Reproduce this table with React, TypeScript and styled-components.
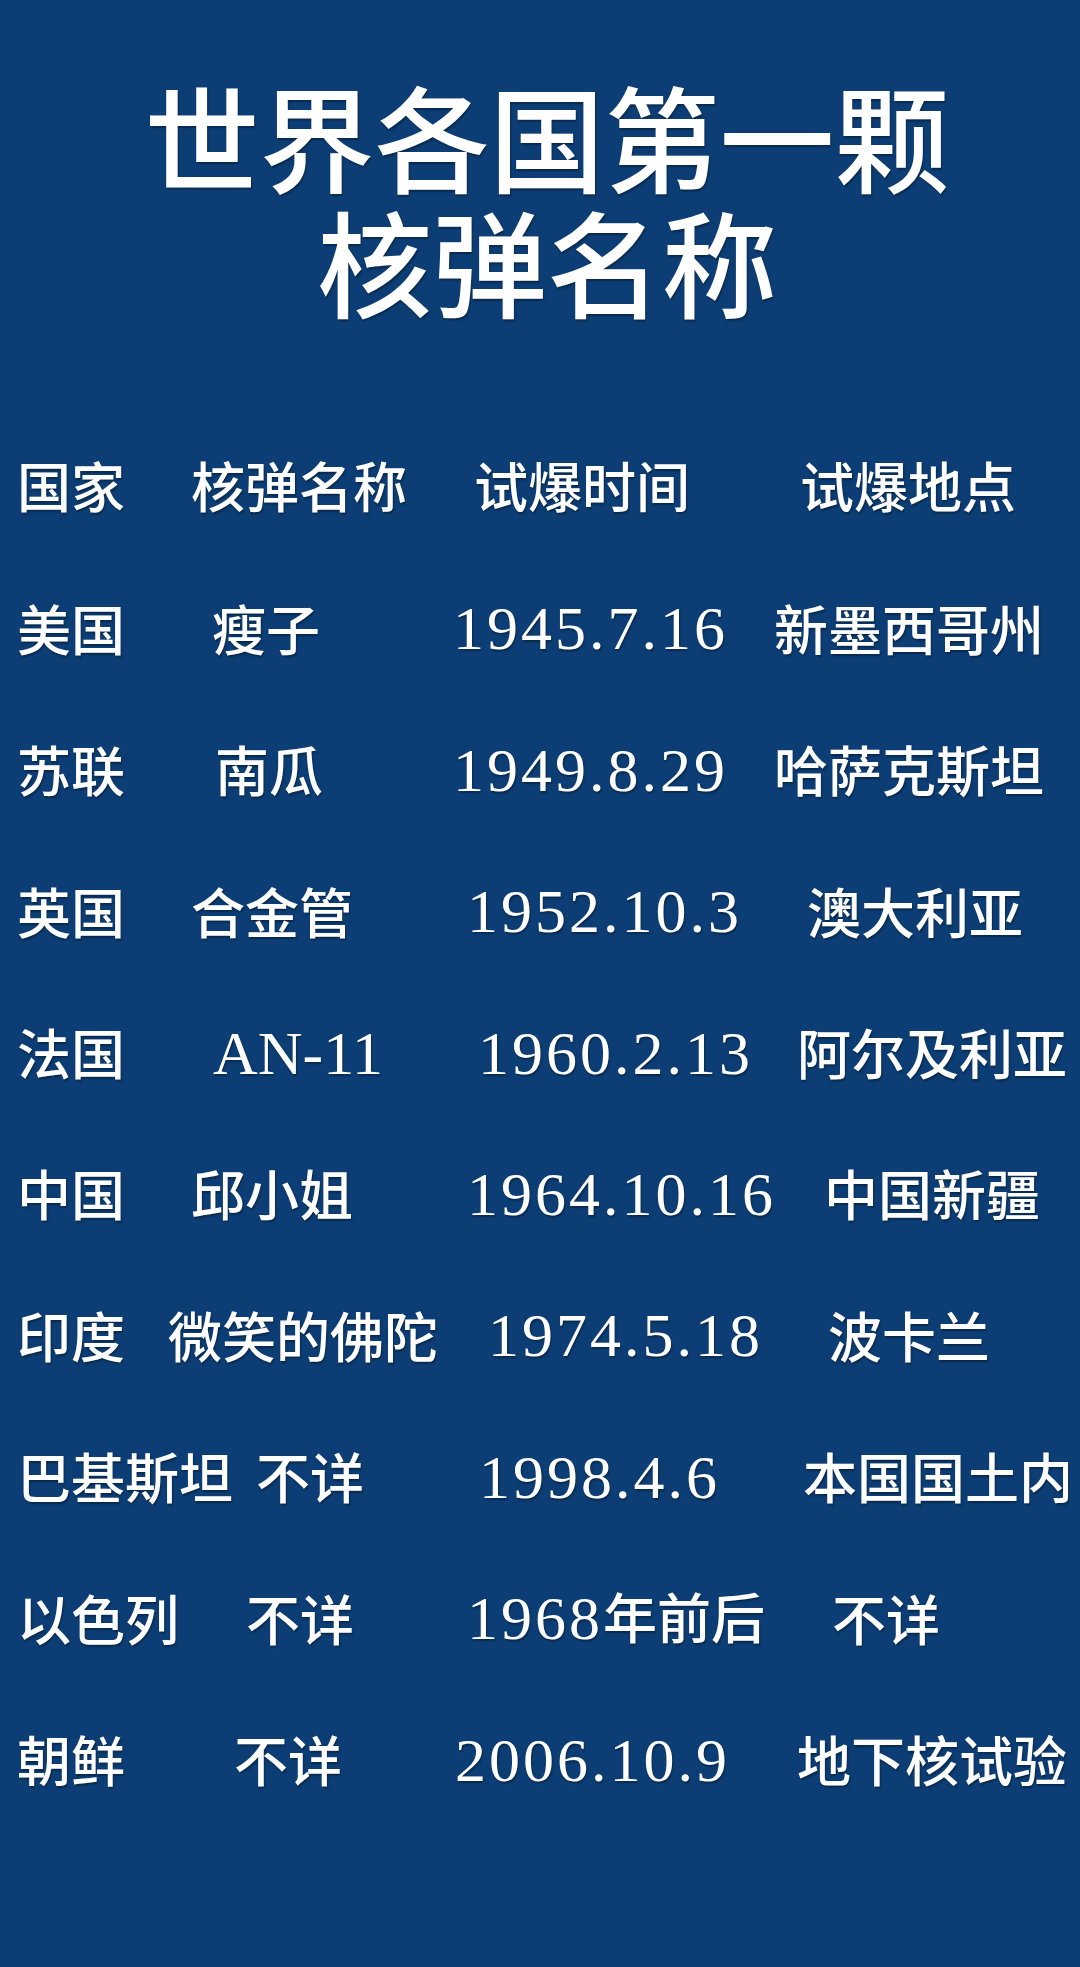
import React from 'react'
import styled, { createGlobalStyle } from 'styled-components'

const GlobalStyle = createGlobalStyle`
  html, body {
    margin: 0;
    padding: 0;
    background: #0c3e75;
  }
`

const Page = styled.div`
  width: 1080px;
  min-height: 1967px;
  background: #0c3e75;
  color: #ffffff;
  font-family: "Noto Sans CJK SC", sans-serif;
  text-shadow: 1px 2px 2px rgba(0, 0, 0, 0.35);
  overflow: hidden;
`

const Title = styled.h1`
  margin: 0;
  padding: 72px 0 0 14px;
  font-size: 115px;
  line-height: 125px;
  font-weight: 500;
  text-align: center;
`

const TitleLine = styled.div`
  height: 125px;
`

const Table = styled.div`
  margin-top: 92px;
  padding-left: 17px;
`

const Row = styled.div`
  display: grid;
  grid-template-columns: 149px 281px 324px 1fr;
  height: 141.4px;
  align-items: center;
  font-size: 54px;
  font-weight: 500;
  line-height: 141.4px;
  white-space: nowrap;
`

const Cell = styled.div<{ $indent: number }>`
  padding-left: ${p => p.$indent}px;
  overflow: visible;
`

const Num = styled.span<{ $tight?: boolean }>`
  font-family: "Liberation Serif", "Noto Sans CJK SC", serif;
  font-size: 62px;
  font-weight: 400;
  letter-spacing: ${p => (p.$tight ? 0 : 3)}px;
`

type TCell = [string, number]
type TRow = [TCell, TCell, TCell, TCell]

const header: TRow = [['国家', 0], ['核弹名称', 25], ['试爆时间', 27], ['试爆地点', 29]]

const rows: TRow[] = [
  [['美国', 0], ['瘦子', 46], ['1945.7.16', 6], ['新墨西哥州', 3]],
  [['苏联', 0], ['南瓜', 49], ['1949.8.29', 6], ['哈萨克斯坦', 3]],
  [['英国', 0], ['合金管', 25], ['1952.10.3', 20], ['澳大利亚', 36]],
  [['法国', 0], ['AN-11', 47], ['1960.2.13', 31], ['阿尔及利亚', 26]],
  [['中国', 0], ['邱小姐', 25], ['1964.10.16', 20], ['中国新疆', 53]],
  [['印度', 0], ['微笑的佛陀', 2], ['1974.5.18', 41], ['波卡兰', 57]],
  [['巴基斯坦', 0], ['不详', 90], ['1998.4.6', 32], ['本国国土内', 32]],
  [['以色列', 0], ['不详', 80], ['1968年前后', 20], ['不详', 61]],
  [['朝鲜', 0], ['不详', 68], ['2006.10.9', 8], ['地下核试验', 26]],
]

// latin runs (dates, AN-11) are set in a serif face, a bit larger than the CJK text
function renderText(text: string) {
  return text.split(/([0-9A-Z.\-]+)/).filter(Boolean).map((part, i) =>
    /^[0-9A-Z.\-]+$/.test(part)
      ? <Num key={i} $tight={/[A-Z]/.test(part)}>{part}</Num>
      : <React.Fragment key={i}>{part}</React.Fragment>
  )
}

const TableRow = ({ cells }: { cells: TRow }) => (
  <Row>
    {cells.map(([text, indent], i) => (
      <Cell key={i} $indent={indent}>{renderText(text)}</Cell>
    ))}
  </Row>
)

export default function App() {
  return (
    <>
      <GlobalStyle />
      <Page>
        <Title>
          <TitleLine>世界各国第一颗</TitleLine>
          <TitleLine>核弹名称</TitleLine>
        </Title>
        <Table>
          <TableRow cells={header} />
          {rows.map((r, i) => <TableRow key={i} cells={r} />)}
        </Table>
      </Page>
    </>
  )
}
